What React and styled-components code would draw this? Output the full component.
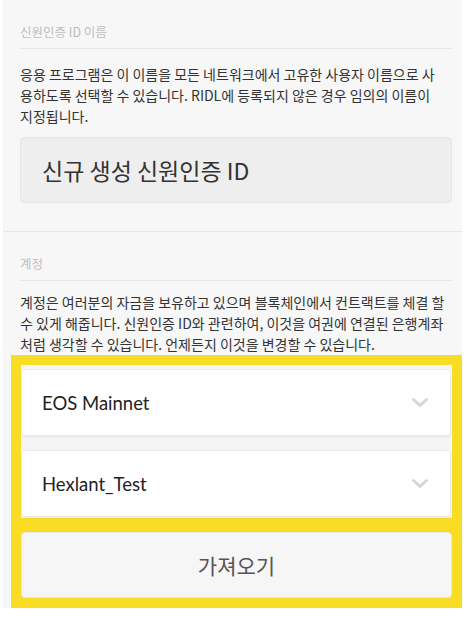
import React from 'react';
import styled, {createGlobalStyle} from 'styled-components';

const GlobalStyle = createGlobalStyle`
  html, body {
    margin: 0;
    padding: 0;
    background: #ffffff;
  }
  body {
    font-family: "Noto Sans CJK KR", "Noto Sans", sans-serif;
  }
`;

const Chevron = () => (
    <svg width="18" height="12" viewBox="0 0 18 12">
        <path d="M2.5 2.5 L9 8.5 L15.5 2.5" fill="none" stroke="#d6d6d6" strokeWidth="3" strokeLinecap="round" strokeLinejoin="round" />
    </svg>
);

const App = () => {
    return (
        <>
            <GlobalStyle />
            <Panel>
                <Section>
                    <Label>신원인증 ID 이름</Label>
                    <Divider />
                    <Text>
                        응용 프로그램은 이 이름을 모든 네트워크에서 고유한 사용자 이름으로 사<br />
                        용하도록 선택할 수 있습니다. RIDL에 등록되지 않은 경우 임의의 이름이<br />
                        지정됩니다.
                    </Text>
                    <NameBox>신규 생성 신원인증 ID</NameBox>
                </Section>
                <FullDivider />
                <Section>
                    <Label>계정</Label>
                    <Divider />
                    <Text $top={11}>
                        계정은 여러분의 자금을 보유하고 있으며 블록체인에서 컨트랙트를 체결 할<br />
                        수 있게 해줍니다. 신원인증 ID와 관련하여, 이것을 여권에 연결된 은행계좌<br />
                        처럼 생각할 수 있습니다. 언제든지 이것을 변경할 수 있습니다.
                    </Text>
                    <Highlight>
                        <SelectGroup>
                            <Select>
                                <span>EOS Mainnet</span>
                                <Chevron />
                            </Select>
                            <Select>
                                <span>Hexlant_Test</span>
                                <Chevron />
                            </Select>
                        </SelectGroup>
                        <ImportButton>가져오기</ImportButton>
                    </Highlight>
                </Section>
            </Panel>
        </>
    );
};

export default App;

const Panel = styled.div`
  width: 459px;
  height: 608px;
  margin-left: 3px;
  background: #f7f7f7;
  overflow: hidden;
`;

const Section = styled.div`
  padding: 0 10px 0 17px;
  display: flex;
  flex-direction: column;
`;

const Label = styled.div`
  font-size: 12.5px;
  color: #bdbdbd;
  line-height: 18px;
  padding-top: 23px;
  padding-bottom: 7px;
`;

const Divider = styled.div`
  border-bottom: 1px solid #e6e6e6;
`;

const FullDivider = styled.div`
  border-bottom: 1px solid #e6e6e6;
  margin-top: 28px;
`;

const Text = styled.p`
  margin: ${p => p.$top || 15}px 0 0;
  font-size: 14px;
  line-height: 21px;
  color: #333333;
  white-space: nowrap;
`;

const NameBox = styled.div`
  margin-top: 10px;
  height: 66px;
  box-sizing: border-box;
  padding-left: 21px;
  display: flex;
  align-items: center;
  background: #eeeeee;
  border: 1px solid #e6e6e6;
  border-radius: 4px;
  font-size: 23px;
  color: #333333;
`;

const Highlight = styled.div`
  margin: 0 -10px 0 -9px;
  background: #f9dd25;
  padding: 10px;
  display: flex;
  flex-direction: column;
  gap: 14px;
`;

const SelectGroup = styled.div`
  background: #f5f5f5;
  padding: 4px 0 1px;
  display: flex;
  flex-direction: column;
  gap: 14px;
`;

const Select = styled.div`
  height: 67px;
  box-sizing: border-box;
  margin-right: 1px;
  padding: 0 21px 0 20px;
  display: flex;
  align-items: center;
  justify-content: space-between;
  background: #ffffff;
  border: 1px solid #ebebeb;
  border-radius: 4px;
  box-shadow: 0 1px 2px rgba(0, 0, 0, 0.06);
  font-family: Lato, "Open Sans", sans-serif;
  font-size: 18.5px;
  color: #222222;
`;

const ImportButton = styled.div`
  height: 66px;
  box-sizing: border-box;
  display: flex;
  align-items: center;
  justify-content: center;
  background: #f6f6f6;
  border: 1px solid #e6e6e6;
  border-radius: 4px;
  font-size: 21px;
  color: #555555;
`;
